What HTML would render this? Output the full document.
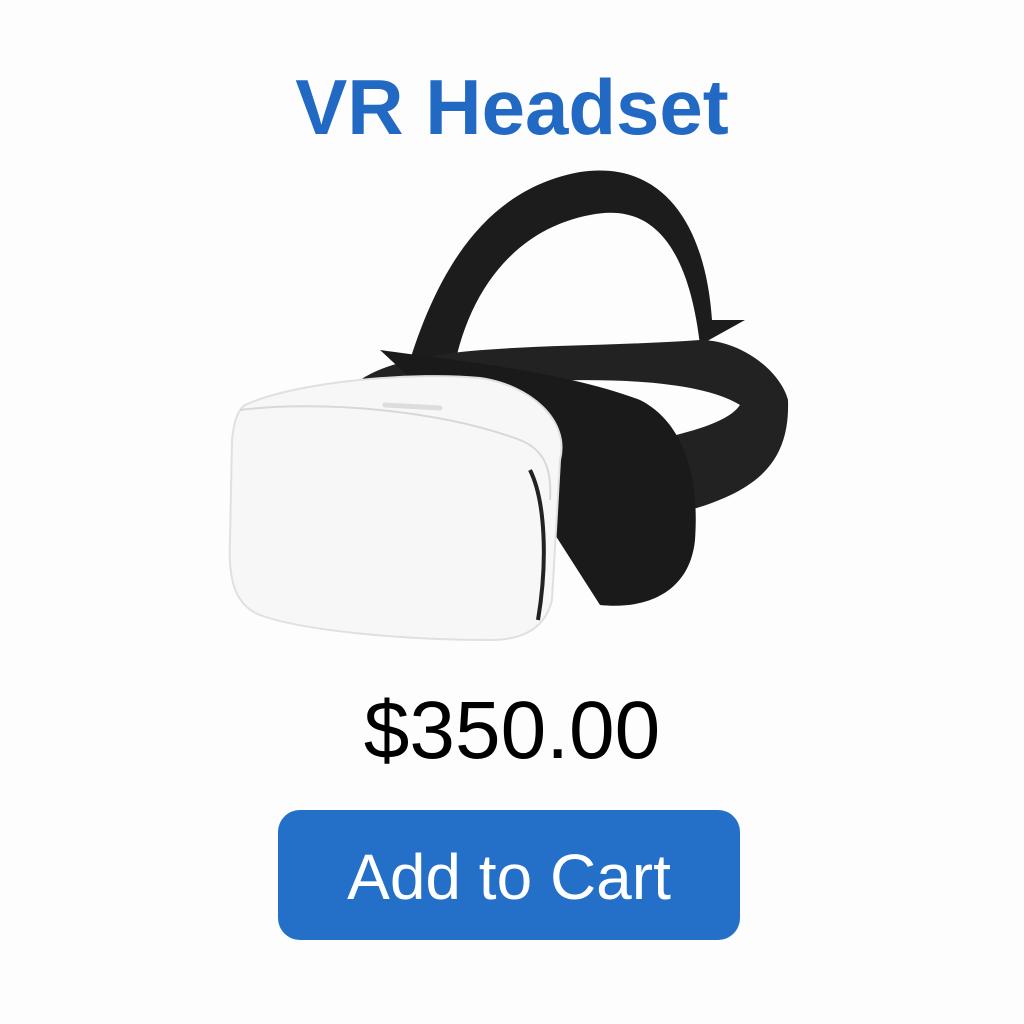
<!DOCTYPE html>
<html><head><meta charset="utf-8"><style>
html,body{margin:0;padding:0;background:#fdfdfd;width:1024px;height:1024px;overflow:hidden;font-family:"Liberation Sans",sans-serif}
.t{position:absolute;left:0;width:1024px;text-align:center}
#title{top:62px;font-size:78px;color:#2269c4;font-weight:bold;letter-spacing:0px}
#price{top:684px;font-size:82px;color:#000}
#btn{position:absolute;left:278px;top:810px;width:462px;height:130px;background:#2470c8;border-radius:22px;color:#fff;font-size:64px;text-align:center;line-height:134px}
svg{position:absolute;left:0;top:0}
</style></head><body>
<div class="t" id="title">VR Headset</div>
<svg width="1024" height="1024" viewBox="0 0 1024 1024">
  <path d="M400 395 C430 280 480 190 580 172 C660 160 705 220 712 320 L745 320 L700 345 C690 260 660 200 590 215 C510 230 460 300 450 395 Z" fill="#1c1c1c"/>
  <path d="M360 380 C420 340 560 350 700 340 C740 340 780 370 788 400 C790 460 760 490 690 510 L660 520 L655 440 C700 430 730 420 740 405 C700 380 600 375 480 385 Z" fill="#222"/>
  <path d="M380 350 C450 360 560 370 640 400 C680 420 700 470 695 540 C690 590 650 610 600 605 L520 480 Z" fill="#1a1a1a"/>
  <path d="M245 405 C300 380 420 372 480 378 C530 385 570 420 560 460 L552 600 C545 630 520 640 490 640 C400 640 300 630 260 615 C235 605 228 580 230 540 L232 440 C234 420 238 410 245 405 Z" fill="#f7f7f7" stroke="#e0e0e0" stroke-width="2"/>
  <path d="M240 410 C320 400 440 410 520 440 C545 450 552 470 550 500" fill="none" stroke="#d8d8d8" stroke-width="2"/>
  <path d="M530 470 C545 500 548 560 538 620" fill="none" stroke="#222" stroke-width="4"/>
  <path d="M385 405 L440 408" stroke="#ddd" stroke-width="5" stroke-linecap="round"/>
</svg>
<div class="t" id="price">$350.00</div>
<div id="btn">Add to Cart</div>
</body></html>
